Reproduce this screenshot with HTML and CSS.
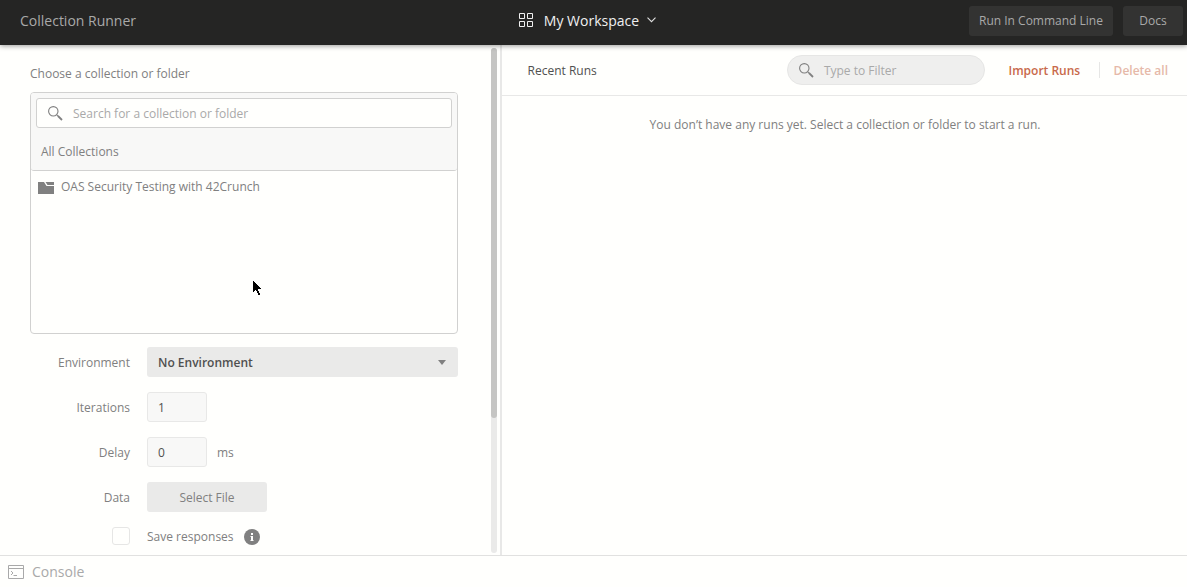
FILE: index.html
```
<!DOCTYPE html>
<html lang="en">
<head>
<meta charset="utf-8">
<title>Collection Runner</title>
<link rel="stylesheet" href="styles.css">
</head>
<body>
<div class="app">
  <header class="header">
    <h1 class="header-title">Collection Runner</h1>
    <div class="workspace">
      <svg class="workspace-icon" width="14" height="14" viewBox="0 0 14 14"><path d="M.5.5h5v5h-5zM8.5.5h5v5h-5zM.5 8.5h5v5h-5zM8.5 8.5h5v5h-5z"/></svg>
      <span>My Workspace</span>
      <svg class="workspace-caret" width="9" height="6" viewBox="0 0 9 6"><path d="M.5.7l4 4 4-4"/></svg>
    </div>
    <div class="header-actions">
      <button class="dark-button">Run In Command Line</button>
      <button class="dark-button docs">Docs</button>
    </div>
  </header>
  <main class="main">
    <section class="setup">
      <div class="setup-content">
        <div class="setup-label">Choose a collection or folder</div>
        <div class="picker">
          <div class="picker-head">
            <div class="search">
              <svg class="search-icon" width="15" height="15" viewBox="0 0 15 15"><circle cx="5.3" cy="5.3" r="4.7"/><path d="M8.8 8.8l1.5 1.5"/><path class="handle" d="M10 10l4 4"/></svg>
              <span>Search for a collection or folder</span>
            </div>
            <div class="crumb">All Collections</div>
          </div>
          <div class="picker-item">
            <svg width="16" height="12" viewBox="0 0 16 12"><path fill="#808080" d="M0 0h6l2.500 4H16v8H0zM7.500 0H16v3H9.500z"/></svg>
            <span>OAS Security Testing with 42Crunch</span>
          </div>
        </div>
        <div class="row">
          <label>Environment</label>
          <div class="select"><span>No Environment</span><svg width="8" height="5" viewBox="0 0 8 5"><path fill="#808080" d="M0 0h8L4 5z"/></svg></div>
        </div>
        <div class="row"><label>Iterations</label><div class="field">1</div></div>
        <div class="row"><label>Delay</label><div class="field">0</div><span class="unit">ms</span></div>
        <div class="row"><label>Data</label><button class="file-button">Select File</button></div>
        <div class="check-row">
          <span class="checkbox"></span>
          <span class="check-label">Save responses</span>
          <svg class="info-icon" width="16" height="16" viewBox="0 0 16 16"><circle cx="8" cy="8" r="8" fill="#808080"/><path fill="#fff" d="M7 4h2v2H7zM6.500 7H9v4h.5v1h-3v-1H7V8h-.5z"/></svg>
        </div>
      </div>
      <div class="scrollbar"><div class="thumb"></div></div>
    </section>
    <section class="runs">
      <div class="runs-head">
        <h2 class="runs-title">Recent Runs</h2>
        <div class="filter">
          <svg class="search-icon" width="15" height="15" viewBox="0 0 15 15"><circle cx="5.3" cy="5.3" r="4.7"/><path d="M8.800 8.800l1.500 1.500"/><path class="handle" d="M10 10l4 4"/></svg>
          <span>Type to Filter</span>
        </div>
        <span class="link">Import Runs</span>
        <span class="link disabled">Delete all</span>
      </div>
      <p class="empty">You don’t have any runs yet. Select a collection or folder to start a run.</p>
    </section>
  </main>
  <footer class="footer">
    <svg class="console-icon" width="16" height="14" viewBox="0 0 16 14"><path d="M.5.5h15v13H.5zM.5 3.500h15M3 6l2 2-2 2M5.500 10.500h3.500"/></svg>
    <span>Console</span>
  </footer>
  <svg class="cursor" width="8" height="14" viewBox="0 0 8 14"><path d="M0 0h1v1h1v1h1v1h1v1h1v1h1v1h1v1h1v1H5v2h1v2h1v2H5v-2H4v-2H3v-1H2v1H1v1H0z"/></svg>
</div>
</body>
</html>
```
FILE: styles.css
```
* { box-sizing: border-box; }
body {
  margin: 0;
  font: 12px/16px "Open Sans", sans-serif;
  color: #808080;
  background: #fffffd;
}
h1, h2, p { margin: 0; font-weight: 400; }
button { font: inherit; border: 0; padding: 0; border-radius: 3px; }
svg { display: block; flex: none; }
.app {
  position: relative;
  height: 587px;
  display: flex;
  flex-direction: column;
  overflow: hidden;
}
.header {
  position: relative;
  z-index: 1;
  flex: none;
  height: 45px;
  padding: 0 4px 4px 20px;
  display: grid;
  grid-template-columns: 1fr auto 1fr;
  align-items: center;
  background: #252524;
  box-shadow: 0 1px 5px rgba(0, 0, 0, .4);
}
.header-title { font-size: 14px; line-height: 20px; color: #a9a9a9; }
.workspace {
  display: flex;
  align-items: center;
  margin-right: 28px;
  font-size: 14px;
  line-height: 20px;
  color: #f0f0f0;
}
.workspace-icon { margin: 0 11px 2px 0; fill: none; stroke: #f0f0f0; }
.workspace-caret { margin: 0 0 1px 8px; fill: none; stroke: #e0e0e0; stroke-width: 1.1; }
.header-actions { display: flex; justify-content: flex-end; gap: 10px; }
.dark-button { width: 144px; height: 30px; background: #333332; color: #a9a9a9; }
.dark-button.docs { width: 60px; }

.main { flex: 1; min-height: 0; display: flex; }
.setup {
  width: 502px;
  display: flex;
  border-right: 2px solid #e8e8e7;
  overflow: hidden;
}
.setup-content { width: 491px; padding: 20px 33px 0 30px; }
.setup-label { height: 27px; line-height: 17px; }
.picker { height: 242px; border: 1px solid #d1d1d0; border-radius: 4px; margin-bottom: 13px; }
.picker-head {
  height: 78px;
  padding: 5px;
  background: #f8f8f7;
  border-bottom: 1px solid #d1d1d0;
  border-radius: 3px;
}
.search {
  height: 30px;
  border: 1px solid #d1d1d0;
  border-radius: 3px;
  background: #fffffd;
  display: flex;
  align-items: center;
  padding-left: 11px;
  gap: 10px;
  color: #a9a9a9;
}
.search-icon { fill: none; stroke: #808080; stroke-width: 1.1; }
.handle { stroke-width: 1.8; }
.search span, .filter span, .select span, .row label, .unit,
.check-label, .runs-title, .link { line-height: 18px; }
.search span, .filter span, .select span, .row label, .unit,
.runs-title, .check-label { padding-top: 1px; }
.crumb { padding: 16px 5px 0; }
.picker-item { display: flex; align-items: center; gap: 7px; padding: 8px 7px; }
.picker-item svg { margin-top: 2px; }
.row { height: 30px; margin-bottom: 15px; display: flex; align-items: center; }
.row label { width: 100px; margin-right: 17px; text-align: right; }
.select {
  flex: 1;
  height: 30px;
  padding: 0 12px 0 11px;
  display: flex;
  align-items: center;
  justify-content: space-between;
  background: #eaeae9;
  border-radius: 3px;
  color: #505050;
  font-weight: 600;
}
.field {
  width: 60px;
  height: 30px;
  padding: 7px 10px 5px;
  border: 1px solid #e8e8e7;
  border-radius: 3px;
  background: #f8f8f7;
  color: #505050;
}
.unit { margin-left: 10px; }
.file-button { width: 120px; height: 30px; padding-top: 2px; background: #eaeae9; color: #808080; }
.check-row { height: 18px; padding-left: 82px; display: flex; align-items: center; }
.checkbox { width: 18px; height: 18px; border: 1px solid #e6e6e5; border-radius: 3px; }
.check-label { margin: 0 10px 0 17px; }
.info-icon { margin-top: 2px; }
.scrollbar { width: 6px; margin: 3px 0 2px; background: #eaeae9; border-radius: 3px; }
.thumb { height: 370px; background: #c5c5c3; border-radius: 3px; }

.runs { flex: 1; }
.runs-head {
  height: 51px;
  border-bottom: 1px solid #e8e8e7;
  display: flex;
  align-items: center;
  padding: 0 19px 0 25.5px;
}
.runs-title { font-size: 12px; color: #505050; flex: 1; }
.filter {
  width: 198px;
  height: 30px;
  border: 1px solid #e6e6e5;
  border-radius: 15px;
  background: #efefee;
  display: flex;
  align-items: center;
  padding-left: 11px;
  gap: 10px;
  margin-right: 23.6px;
  color: #a9a9a9;
}
.link { padding-top: 1px; font-weight: 600; color: #c8694b; }
.link.disabled {
  margin-left: 18.4px;
  padding-left: 15px;
  background: linear-gradient(#e6e6e5, #e6e6e5) 0 1px / 1px 16px no-repeat;
  color: #e6b9a8;
}
.empty { padding: 21px 0 0 1px; text-align: center; }

.footer {
  flex: none;
  height: 32px;
  padding-left: 8px;
  border-top: 1px solid #e1e1e0;
  display: flex;
  align-items: center;
  gap: 8px;
  font-size: 14px;
  color: #a9a9a9;
}
.console-icon { fill: none; stroke: #a9a9a9; }
.cursor { position: absolute; left: 253px; top: 281px; }
```
